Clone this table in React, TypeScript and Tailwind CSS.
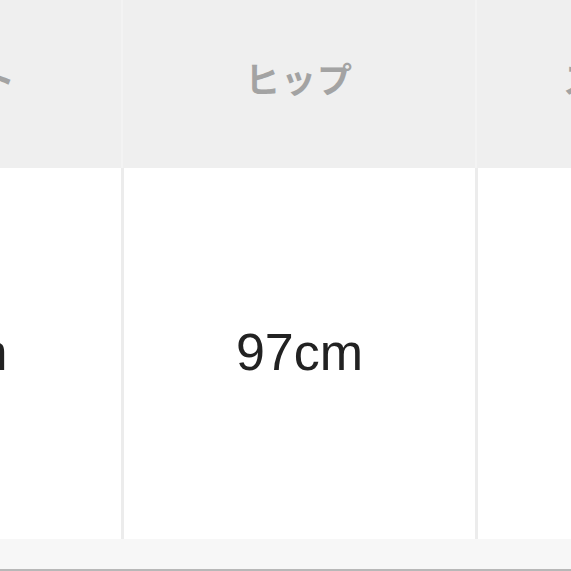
import React from 'react'

const COLS = [
  { head: 'ウエスト', value: '70cm' },
  { head: 'ヒップ', value: '97cm' },
  { head: 'スカート丈', value: '60cm' },
]

export default function App() {
  return (
    <div className="w-[571px] h-[571px] overflow-hidden bg-white">
      <div className="flex flex-col w-[1062px] -ml-[233px]">
        {/* header row */}
        <div className="flex h-[168px] bg-[#efefef]">
          {COLS.map((c, i) => (
            <div key={c.head}
              className={[
                'w-[354px] flex items-center justify-center pb-[12px]',
                i > 0 ? 'border-l-2 border-[#f3f3f3]' : '',
              ].join(' ')}>
              <span className="text-[35px] font-bold text-[#a3a3a3] tracking-[1px] [font-family:'Noto_Sans_CJK_JP',sans-serif]">
                {c.head}
              </span>
            </div>
          ))}
        </div>

        {/* body row */}
        <div className="flex h-[371px] bg-white">
          {COLS.map((c, i) => (
            <div key={c.value + i}
              className={[
                'w-[354px] flex items-center justify-center pb-[4px]',
                i > 0 ? 'border-l-[3px] border-[#ececec]' : '',
              ].join(' ')}>
              <span className="text-[52px] text-[#222] [font-family:'Liberation_Sans',Arial,sans-serif]">
                {c.value}
              </span>
            </div>
          ))}
        </div>

        <div className="h-[32px] bg-[#f7f7f7] border-b-2 border-[#b8b8b8]" />
      </div>
    </div>
  )
}
